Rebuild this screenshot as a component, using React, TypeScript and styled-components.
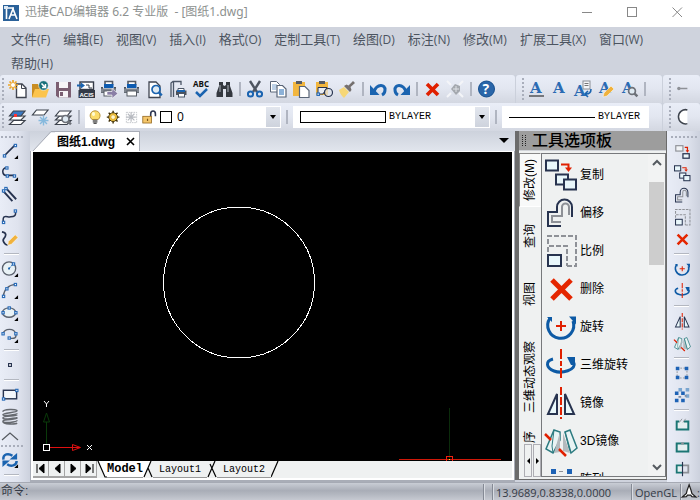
import React from "react";
import styled, { createGlobalStyle, css } from "styled-components";

const ui = `"Open Sans", "Noto Sans CJK SC", sans-serif`;
const cjk = `"Liberation Sans", "Noto Sans CJK SC", sans-serif`;
const mono = `"Liberation Mono", "Noto Sans CJK SC", monospace`;

const Global = createGlobalStyle`
  * { box-sizing: border-box; }
  body { margin: 0; background: #cfd3dd; font-family: ${ui}; font-size: 12px; color: #111; }
  button, select { font: inherit; color: inherit; border: 0; margin: 0; padding: 0; background: none; }
  svg { display: block; flex: none; }
`;

/* ---------- icons ---------- */

const navy = "#27334f";
const blue = "#1b64b0";
const red = "#e02000";
const teal = "#1b7674";
const grey = "#8e9197";

const spokes = (cx: number, cy: number, r: number, color: string, w = 1.4) => (
  <path
    stroke={color}
    strokeWidth={w}
    d={`M${cx - r} ${cy}H${cx + r}M${cx} ${cy - r}V${cy + r}M${cx - r * 0.7} ${cy - r * 0.7}L${cx + r * 0.7} ${cy + r * 0.7}M${cx + r * 0.7} ${cy - r * 0.7}L${cx - r * 0.7} ${cy + r * 0.7}`}
  />
);
const node = (x: number, y: number) => (
  <rect x={x - 1} y={y - 1} width="2.4" height="2.4" fill="#fff" stroke="#2a6cb8" strokeWidth="1.2" />
);
const more = <path d="M18 14v4h-4z" fill="#000" />;
const printer = (
  <>
    <path d="M5 5V1.500H12.500V5" fill="#fff" stroke="#555a63" strokeWidth="1.600" />
    <rect x="4" y="4" width="9.500" height="4" fill="#0d5bb0" />
    <path d="M1 7h2v2h11V7h2v6H1z" fill="#4c525c" />
    <rect x="1" y="8.500" width="15" height="4" fill="#7f858e" />
    <rect x="4" y="11" width="9.500" height="5" fill="#fff" stroke="#555a63" />
  </>
);
const bigA = (
  <text x="2" y="13" fontFamily="DejaVu Serif" fontWeight="700" fontSize="15" fill="#2b6bb3">A</text>
);
const sheets = (top: string) => (
  <>
    <path d="M5.500 12.500H17L13 16.500H1.500z" fill="#fff" stroke="#3d434d" strokeWidth="1.200" />
    <path d="M5.500 8H17L13 12H1.500z" fill="#fff" stroke="#3d434d" strokeWidth="1.200" />
    <path d="M5.500 3H17L13 8H1.500z" fill={top} stroke="#3d434d" strokeWidth="1.200" />
  </>
);
const lens = (x: number, y: number, r: number, c: string) => (
  <>
    <circle cx={x} cy={y} r={r} fill="#dfeaf2" stroke={c} strokeWidth="1.700" />
    <path d={`M${x + r * 0.7} ${y + r * 0.7}l3 3`} stroke={c} strokeWidth="2.400" />
  </>
);
const undoShape = (
  <>
    <path d="M5 11.500C8 3.500 16.500 4 16 10c0 2.500-1 4-3 5" fill="none" stroke={blue} strokeWidth="3" />
    <path d="M1 5v10h9.500z" fill={blue} />
  </>
);

const small: Record<string, React.ReactNode> = {
  new: (<><path d="M8.500 4H14l4 4v9.500H8.500z" fill="#fff" stroke="#3f4450" strokeWidth="1.400" /><path d="M13.500 4v4.500H18" fill="none" stroke="#3f4450" />{spokes(5, 5, 5, "#eda62a", 1.700)}<circle cx="5" cy="5" r="2" fill="#fff" /></>),
  open: (<><path d="M1 4h6l1.500 2H15v11H1z" fill="#c98d22" /><path d="M4 9h14l-3 8.500H1z" fill="#fcc44c" /><circle cx="12.500" cy="5.500" r="4.800" fill="#17707a" stroke="#fff" strokeWidth=".6" /><path d="M10.500 3.500L14 7M14.500 4v3.500H11" stroke="#fff" strokeWidth="1.500" fill="none" /></>),
  save: (<><path d="M2 2h15v15.500H4L2 15.500z" fill="#7b5f72" /><rect x="5" y="2" width="9" height="6" fill="#f7f5f7" /><rect x="5" y="11" width="9" height="6.500" fill="#f7f5f7" /><rect x="6" y="12" width="3" height="4" fill="#7b5f72" /></>),
  acis: (<><rect x="3" y="2" width="13.500" height="7.500" fill="#fff" stroke="#333a47" strokeWidth="1.400" /><path d="M9 5h3v3h3" fill="none" stroke="#333a47" /><path d="M0 4.500h4V2.500L8 5.500 4 8.500v-2H0z" fill={blue} /><rect x="1.500" y="10" width="16.500" height="8" fill="#333a47" /><text x="2.500" y="16.500" fontFamily="Liberation Sans" fontWeight="700" fontSize="6" fill="#fff">ACIS</text></>),
  printArrow: (<>{printer}<path d="M7 11.500h5V8.500l6 5-6 5v-3.500H7z" fill="#8a7fa6" stroke="#fff" strokeWidth=".6" /></>),
  print: printer,
  preview: (<><path d="M3 2h7l4 4v11.500H3z" fill="#fff" stroke="#3f4450" strokeWidth="1.300" />{lens(10, 9.500, 4, blue)}</>),
  pageSetup: (<><path d="M2 17V3l2-1.500h8V5M4.500 2v15" fill="none" stroke="#4b5667" strokeWidth="1.300" /><path d="M9 11V8.500h6V11" fill="#fff" stroke="#4b5667" /><rect x="7" y="10.500" width="10.500" height="4.500" fill="#4c525c" /><rect x="8" y="10" width="8" height="2" fill={blue} /><rect x="9.500" y="13.500" width="6" height="3.500" fill="#fff" stroke="#4b5667" /></>),
  spell: (<><text x="1" y="7" fontFamily="Open Sans" fontWeight="700" fontSize="8">ABC</text><path d="M4 12l4 4 7-7" fill="none" stroke={blue} strokeWidth="2.500" /></>),
  find: (<><path d="M4 2h4v3l1.500 1L11 5V2h4v4l2.500 7v4H11V9H8v8H1.500v-4L4 6z" fill="#34383f" /><path d="M5 5v7M13 5v7" stroke="#9ca2aa" strokeWidth="1.200" /></>),
  cut: (<><path d="M4 1l7 11M14 1L7 12" stroke="#4d5460" strokeWidth="2.400" /><circle cx="4.500" cy="14" r="2.600" fill="none" stroke={blue} strokeWidth="2" /><circle cx="13.500" cy="14" r="2.600" fill="none" stroke={blue} strokeWidth="2" /></>),
  copyDoc: (<><path d="M1.500 1.500h6l3 3V12h-9z" fill="#fff" stroke="#596577" /><path d="M3 5h5M3 7h5M3 9h4" stroke="#7aa3cf" /><path d="M8 5.500h5.500L17 9v8H8z" fill="#fff" stroke="#596577" strokeWidth="1.200" /><path d="M10 10h5M10 12h5M10 14h5" stroke={blue} /></>),
  paste: (<><rect x="1" y="2" width="12" height="14" fill="#f2b63f" /><rect x="4" y="1" width="6" height="3" fill="#555a63" /><path d="M7.500 6.500H13l4 4v7H7.500z" fill="#fff" stroke="#596577" strokeWidth="1.200" /></>),
  pasteBlock: (<><rect x="1" y="2" width="12" height="13" fill="#f2b63f" /><rect x="4" y="1" width="6" height="3" fill="#555a63" /><path d="M3 7.500h9L8 14H3z" fill="#e9edf3" stroke={navy} /><circle cx="13.500" cy="12.500" r="4" fill="#dfe5ee" fillOpacity=".7" stroke={navy} strokeWidth="1.200" />{node(3, 14)}</>),
  brush: (<><path d="M1 10l5-3 5 5-5 6c-2-2-4-4-5-8z" fill="#f6d777" /><path d="M6 6l6 6 1.500-2-1-3L17 3l-2-2-4.500 4.500-2-1z" fill="#75706f" /></>),
  undo: undoShape,
  redo: <g transform="matrix(-1 0 0 1 19 0)">{undoShape}</g>,
  del: <path d="M4 4l11 11M15 4L4 15" stroke={red} strokeWidth="3.600" />,
  explode: (<><path d="M1 1l4 4M17 1l-4 4M1 17l4-4M17 17l-4-4" stroke="#f4f5f8" strokeWidth="2" /><path d="M5 9l4-5 5 2v5l-4 4z" fill="#a4a8ae" /><path d="M7 9h6M10 6v6" stroke="#dfe2e7" /></>),
  help: (<><circle cx="9.500" cy="9" r="8" fill="#2a66a9" stroke="#17508f" /><text x="5.500" y="14" fontFamily="Open Sans" fontWeight="700" fontSize="14" fill="#fff">?</text></>),
  text1: (<>{bigA}<path d="M1 16h15" stroke="#111" strokeWidth="1.200" /></>),
  text2: bigA,
  text3: (<><g transform="translate(-2 3)">{bigA}</g><rect x="9" y="1" width="7" height="8" fill="#f4f5f7" stroke="#8b8f96" /><path d="M10.500 3.500h4M10.500 5.500h4" stroke="#777" /><path d="M17 9c0 4-2 5-5 5m2-3l-3 3 3 3" stroke={blue} fill="none" strokeWidth="1.600" /></>),
  text4: (<>{bigA}<path d="M6 17l1-4 7-7 3 3-7 7z" fill="#f0b23d" stroke="#fff" strokeWidth=".5" /></>),
  text5: (<>{bigA}{lens(12, 11, 3.400, "#6d7178")}</>),
  dimEnd: (<><circle cx="3" cy="9" r="1.800" fill={grey} /><path d="M3 9h9" stroke={grey} strokeWidth="1.500" /></>),
  arcTool: (<path d="M12 2A7.500 7.500 0 1 0 12 16.500" fill="#fff" stroke="#3d434d" strokeWidth="1.600" />),
  layers: (<>{sheets("#3a78c2")}<rect x="6" y="6" width="3" height="3" fill="#f33" /></>),
  layerFreeze: (<><path d="M5.500 2H17L13 7H1.500z" fill="#fff" stroke="#3d434d" strokeWidth="1.200" />{spokes(12.500, 12.500, 5, "#86b9dd")}</>),
  layerFind: (<>{sheets("#fff")}{lens(11.500, 11, 3.500, "#6d7178")}</>),
  line: (<><path d="M4 14L15 3" stroke={navy} strokeWidth="1.800" />{node(3.500, 14.500)}{node(15, 3.500)}{more}</>),
  pline: (<><path d="M6 4C0 4 1 12 6 12h8" fill="none" stroke={navy} strokeWidth="1.600" />{node(6, 4)}{node(6.500, 12.500)}{node(14, 12.500)}{more}</>),
  mline: (<><path d="M2 5l10 11M5 2l11 12" stroke={navy} strokeWidth="2" />{node(5, 2.500)}{node(2.500, 5)}</>),
  spline: (<><path d="M2.500 15C1 6 7 10 9 9.500S17 10 15 3" fill="none" stroke={navy} strokeWidth="1.600" />{node(2.500, 15)}{node(15, 3)}</>),
  sketch: (<><path d="M1 2c6 1 4 5 2 7s1 7 4 7" fill="none" stroke={navy} strokeWidth="1.800" /><path d="M7 16l1-4 7-7 3 3-7 7z" fill="#f0b23d" stroke="#fff" strokeWidth=".5" /></>),
  circle: (<><circle cx="8.500" cy="9" r="7" fill="#e9f2f6" stroke="#5a616d" strokeWidth="1.400" /><path d="M8.500 9L13 4" stroke={blue} strokeDasharray="2 1" />{node(13, 4)}<rect x="7.500" y="8" width="2" height="2" fill={blue} />{more}</>),
  arc: (<><path d="M2.500 15C3 8 8 3 15 2.500" fill="none" stroke="#5a616d" strokeWidth="1.400" />{node(2.500, 15)}{node(6, 7)}{node(15, 2.500)}{more}</>),
  ellipse: (<><ellipse cx="8.500" cy="9" rx="7" ry="5" fill="#e9f2f6" stroke="#5a616d" strokeWidth="1.400" />{node(2, 9)}{node(15.500, 9)}{node(8.500, 4)}{more}</>),
  ellipseArc: (<><path d="M2 8C4 2 14 2 15.500 8s-3 5-6 5" fill="none" stroke="#5a616d" strokeWidth="1.400" />{node(2, 8)}{node(15.500, 8)}{node(8.500, 12.500)}{more}</>),
  point: <rect x="8" y="8" width="3" height="3" fill="#fff" stroke={navy} strokeWidth="1.200" />,
  rect: (<><rect x="2.500" y="4.500" width="14" height="9" fill="#f3f6fa" stroke={navy} strokeWidth="1.500" />{node(16.500, 4.500)}{node(2.500, 13.500)}</>),
  helix: (<path d="M2 4c0-3 15-3 15-1S2 5 2 7s15 0 15-1.500M17 7c0 2-15 1-15 3.500s15 0 15-1M17 10.500c0 2-15 1-15 3.500s15 1 15-1M2 14c0 4 14 3 15 2" fill="none" stroke="#666a70" strokeWidth="1.600" />),
  sync: (<><path d="M2.500 9C2 3 8 2 12 5" fill="none" stroke={blue} strokeWidth="2.600" /><path d="M17 2v7h-8z" fill={blue} /><path d="M16.500 10.500c0 5-6 6.500-10 3.500" fill="none" stroke={blue} strokeWidth="2.600" /><path d="M1.500 17v-7h8z" fill={blue} />{more}</>),
  arr: (<><path d="M3.500 3.500h11v11h-11z" fill="none" stroke={grey} strokeDasharray="2 1.500" /><path d="M2 2h4v4H2zM12 2h4v4h-4zM2 12h4v4H2zM12 12h4v4h-4z" fill="#1d62b5" /></>),
  arrMany: (<><path d="M5 1h4v4H5zM13 1h4v4h-4zM13 8h4v4h-4z" fill="#7ba6d0" /><path d="M1 5h4v4H1zM8 5h4v4H8zM1 13h4v4H1zM8 13h4v4H8z" fill="#1d62b5" /><path d="M12 9h2v2h-2zM5 10h3v2H5z" fill="#7d8aa0" /></>),
  breakPt: (<><path d="M11 5h5v9H3V5h3" fill="#e6eff0" stroke={teal} strokeWidth="2.200" /><path d="M6 6l3-4M10 6l3-4" stroke={grey} /></>),
  breakTwo: (<><rect x="3" y="5" width="13" height="9" fill="#e6eff0" stroke={teal} strokeWidth="2.200" /><path d="M8 5h3" stroke={grey} strokeWidth="2.200" /></>),
  joinTool: (<><path d="M9 5H3v8h6" fill="#e6eff0" stroke={teal} strokeWidth="2" /><path d="M10 5h6v8h-6" fill="none" stroke={grey} strokeWidth="2" /><path d="M9.500 1v16" stroke={navy} strokeWidth="1.300" /></>),
  bulb: (<><path d="M5 12C0 7 4 1 9 1s9 6 4 11z" fill="#fcdc6b" stroke="#a77c21" /><ellipse cx="7" cy="5" rx="2" ry="2.500" fill="#fffbd5" /><path d="M6 13h6M6 15h6M7 17h4" stroke="#555" strokeWidth="1.500" /></>),
  sun: (<>{spokes(9, 9, 8, "#3b2b05", 1.800)}<circle cx="9" cy="9" r="5.500" fill="#f8c940" stroke="#3b2b05" strokeWidth="1.200" /><circle cx="9" cy="9" r="3" fill="#fff7cd" stroke="#d59d1d" /></>),
  vpFreeze: (<><rect x="3" y="3" width="13" height="13" fill="none" stroke="#b7bac0" strokeDasharray="2 1" />{spokes(9, 9, 6, "#b7bac0", 1.500)}</>),
  lock: (<><path d="M11 9V5c0-5 6-5 6 0v3" fill="none" stroke="#2c3550" strokeWidth="2" /><rect x="1" y="8" width="11" height="8.500" fill="#f4c66b" stroke="#93671f" /><path d="M7 11v3" stroke="#7d571b" strokeWidth="1.500" /></>),
  compass: (<path d="M9 1l2.500 7 1 4 5 4.500-5-.500-1.500-2H7l-1.500 2-5 .500 5-4.500 1-4z" fill="#fff" stroke="#222" strokeWidth="1.600" />),
  copyOne: (<><rect x="2" y="3" width="8" height="6" fill="#f2f4f7" stroke={grey} strokeWidth="1.300" /><path d="M12 5h3v4" fill="none" stroke={red} strokeWidth="1.400" /><path d="M13 8h4l-2 3z" fill={red} /><rect x="10" y="12" width="7" height="5" fill="#eff9fc" stroke={navy} strokeWidth="1.400" /></>),
};

const large: Record<string, React.ReactNode> = {
  copy: (<><g fill="#e9f7fb" stroke={navy} strokeWidth="2"><rect x="1" y="1.500" width="12" height="10" /><rect x="11" y="15.500" width="12" height="10" /><rect x="19" y="20.500" width="12" height="10" /></g><path d="M16 5.500h7.500V9" fill="none" stroke={red} strokeWidth="2" /><path d="M20 8.500h7L23.500 13z" fill={red} /></>),
  offset: (<><path d="M16 29H3V15h9v-5a7.500 7.500 0 0 1 15 0v10" fill="none" stroke={navy} strokeWidth="2" /><path d="M16 25H7v-6h10v-9a3.500 3.500 0 0 1 7 0v8" fill="none" stroke={grey} strokeWidth="2" /></>),
  scale: (<><path d="M3 9V1h28v30H21" fill="none" stroke={grey} strokeWidth="2" strokeDasharray="5 2" /><path d="M3 17v-6h19v20" fill="none" stroke={grey} strokeWidth="2" strokeDasharray="5 2" /><rect x="3" y="20" width="13" height="11" fill="#e9f7fb" stroke={navy} strokeWidth="2" /></>),
  remove: <path d="M7 7l19 19M26 7L7 26" stroke="#e42600" strokeWidth="5" />,
  rotate: (<><path d="M5 7a13 13 0 1 0 23 3" fill="none" stroke="#0d5aa5" strokeWidth="3" /><path d="M2 6h5v5zM24 5.500h7v8z" fill="#0d5aa5" /><path d="M11 15h10M16 10v10" stroke={red} strokeWidth="2" /></>),
  rotate3d: (<><path d="M8 10C0 12 1 19 9 22s22-1 20-8" fill="none" stroke="#0d5aa5" strokeWidth="3" /><path d="M22 8h8v8h-4z" fill="#0d5aa5" /><path d="M16 0v31" stroke={red} strokeWidth="2" strokeDasharray="10 2 5 2" /></>),
  mirror: (<><path d="M12 7v20H3zM20 7v20h9z" fill="#eaf8fb" stroke={navy} strokeWidth="2" /><path d="M16 0v32" stroke={red} strokeWidth="2" strokeDasharray="8 2" /></>),
  mirror3d: (<><path d="M9 5l6 2v8L8 28l-7-4zM20 7l5-2 7 18-6 5z" fill="#e9f4f4" stroke="#2c7b80" strokeWidth="1.500" /><path d="M15 7v20l-6 1zM18 8v18l7 2z" fill="#b3babd" /><path d="M9 5l-2 16 1 7M20 7l4 16 2 5" fill="none" stroke="#2c7b80" /><path d="M0 9l6 6M14 24l7 7" stroke={red} strokeWidth="2.500" /></>),
  array: (<><path d="M6 6h5v5H6zM22 6h5v5h-5zM6 22h5v5H6zM22 22h5v5h-5z" fill="#1d62b5" /><path d="M14 8.500h4" stroke={grey} /></>),
};

const Icon = ({ name, size = 18 }: { name: string; size?: number }) => {
  const big = name in large;
  return (
    <svg width={size} height={size} viewBox={big ? "0 0 33 33" : "0 0 19 19"} fill="none" overflow="visible" aria-hidden="true">
      {big ? large[name] : <g fill="#111">{small[name]}</g>}
    </svg>
  );
};

/* ---------- layout ---------- */

const Window = styled.div`
  height: 100vh;
  display: flex;
  flex-direction: column;
  overflow: hidden;
`;
const TitleBar = styled.header`
  height: 27px;
  flex: none;
  display: flex;
  align-items: center;
  gap: 6px;
  padding: 0 0 3px 3px;
  background: #fff;
  color: #8d918f;
  white-space: pre;
`;
const TitleText = styled.h1`
  flex: 1;
  margin: 0;
  font: 400 12px/18px "Noto Sans", "Noto Sans CJK SC", sans-serif;
`;
const WinButtons = styled.div`
  display: flex;
`;
const WinButton = styled.button`
  width: 45px;
  height: 22px;
  display: grid;
  place-items: center;
`;
const Menu = styled.nav`
  flex: none;
  display: flex;
  flex-wrap: wrap;
  column-gap: 13px;
  padding: 0 11px;
  background: #cfd3dd;
`;
const MenuItem = styled.button`
  height: 24px;
  font: 13px/20px ${ui};
  color: #4c5460;
  white-space: nowrap;
  small { font-size: 12px; }
`;
const BarRow = styled.div`
  height: 28px;
  flex: none;
  display: flex;
  background: #cbd0db;
  gap: 1px;
`;
const Bar = styled.div<{ $w?: number }>`
  ${(p) => (p.$w ? css`flex: 0 0 ${p.$w}px;` : css`flex: 1; min-width: 0;`)}
  display: flex;
  align-items: center;
  overflow: hidden;
  border-radius: 3px 3px 0 0;
  background: linear-gradient(#e9edf7, #e2e6f0 50%, #d3d7e1);
`;
const dots = (dir: string) => css`
  background: repeating-linear-gradient(${dir}, #a9aebb 0 2px, transparent 2px 4px);
`;
const Grip = styled.span<{ $lead?: number }>`
  flex: none;
  width: 2px;
  height: 22px;
  margin: 0 2px 0 ${(p) => p.$lead ?? 2}px;
  ${dots("to bottom")}
`;
const GripH = styled.span<{ $w: number }>`
  flex: none;
  height: 2px;
  width: ${(p) => p.$w}px;
  margin-bottom: 2px;
  ${dots("to right")}
`;
const Tool = styled.button`
  flex: none;
  width: 23px;
  height: 26px;
  display: grid;
  place-items: center;
`;
const Divider = styled.span`
  flex: none;
  width: 2px;
  height: 14px;
  margin: 0 3px;
  background: #b0b5c1;
`;
const Combo = styled.label<{ $w: number }>`
  flex: none;
  width: ${(p) => p.$w}px;
  height: 22px;
  display: flex;
  align-items: center;
  gap: 3px;
  margin: 0 2px;
  padding: 1px 1px 1px 3px;
  background: #fff;
  color: #000;
`;
const Select = styled.select<{ $mono?: boolean }>`
  flex: 1;
  min-width: 0;
  appearance: none;
  outline: none;
  background: transparent;
  font: ${(p) => (p.$mono ? `10px/18px ${mono}` : `12px/18px ${ui}`)};
`;
const Drop = styled.span`
  width: 14px;
  height: 20px;
  display: grid;
  place-items: center;
  background: linear-gradient(#e2e6ee, #ced3dd);
`;
const LayerColor = styled.span`
  width: 12px;
  height: 12px;
  border: 1px solid #000;
  margin-right: 2px;
`;
const Swatch = styled.span`
  width: 86px;
  height: 12px;
  margin-left: 4px;
  border: 1px solid #000;
`;
const LineSample = styled(Swatch)`
  height: 1px;
  border-width: 1px 0 0;
`;

const Work = styled.main`
  flex: 1;
  min-height: 0;
  display: flex;
`;
const SideBar = styled.aside<{ $right?: boolean }>`
  flex: none;
  width: ${(p) => (p.$right ? 33 : 30)}px;
  display: flex;
  flex-direction: column;
  padding: 5px 0 0 ${(p) => (p.$right ? 4 : 1)}px;
  background: linear-gradient(to right, #e9edf7, #dfe3ee 60%, #ccd1dd);
  overflow: hidden;
`;
const SideTool = styled.button`
  flex: none;
  width: 22px;
  height: 22px;
  display: flex;
  align-items: center;
`;
const RightTool = styled(SideTool)`
  justify-content: center;
`;
const MoreTool = styled(SideTool)`
  height: 17px;
`;
const Rule = styled.span`
  flex: none;
  width: 15px;
  height: 2px;
  margin: 3px;
  background: #b3b7c0;
  border-bottom: 1px solid #fff;
`;

const Doc = styled.section`
  flex: 1;
  min-width: 0;
  display: flex;
  flex-direction: column;
  background: #d9dde7;
`;
const FileTabs = styled.div`
  height: 20px;
  flex: none;
  display: flex;
  align-items: center;
  padding-right: 6px;
  background: linear-gradient(#cdd2dc, #e1e5ed);
`;
const Slant = styled.svg`
  align-self: stretch;
`;
const FileTab = styled.div`
  height: 20px;
  display: flex;
  align-items: center;
  gap: 8px;
  padding: 0 1px 0 2px;
  background: #fff;
  border-top: 1px solid #a9adb7;
  border-right: 1px solid #a9adb7;
  font: 700 12px/16px ${cjk};
  color: #000;
`;
const CloseTab = styled.button`
  width: 15px;
  height: 15px;
  display: grid;
  place-items: center;
`;
const Spring = styled.span`
  flex: 1;
`;
const Sheet = styled.div`
  flex: 1;
  min-height: 0;
  display: flex;
  flex-direction: column;
  border: solid #a9adb7;
  border-width: 0 1px 2px 1px;
  background: #fff;
  padding: 1px 2px 2px;
`;
const Canvas = styled.div`
  flex: 1;
  min-height: 0;
  position: relative;
  background: #000;
  overflow: hidden;
`;
const Drawing = styled.svg`
  width: 100%;
  height: 100%;
`;
const Ucs = styled.svg`
  position: absolute;
  left: 8px;
  bottom: 9px;
`;
const Cursor = styled.svg`
  position: absolute;
  right: 11px;
  bottom: 0;
`;
const Sheets = styled.div`
  height: 17px;
  flex: none;
  display: flex;
  background: #eff1f1;
  overflow: hidden;
`;
const StepButton = styled.button`
  width: 16px;
  background: #eff1f1;
  border: solid #a5a5a5;
  border-width: 0 1px 2px 0;
  display: grid;
  place-items: center;
`;
const SheetTab = styled.button<{ $on?: boolean }>`
  font: ${(p) => (p.$on ? 700 : 400)} ${(p) => (p.$on ? 12 : 10)}px/15px ${mono};
  color: #000;
  border-bottom: 1px solid #999;
  background: ${(p) => (p.$on ? "#fff" : "transparent")};
  padding: 0 ${(p) => (p.$on ? 0 : 6)}px;
`;

const Palette = styled.section`
  flex: none;
  width: 152px;
  display: flex;
  flex-direction: column;
  border: solid #6b6b6b;
  border-width: 0 1px 1px 4px;
  margin-bottom: 2px;
  background: #eff1f1;
`;
const PaletteTitle = styled.h2`
  flex: none;
  height: 20px;
  margin: 0;
  display: flex;
  align-items: center;
  gap: 6px;
  padding-left: 3px;
  background: #9d9d9d;
  border-bottom: 1px solid #d0d3d8;
  font: 500 16px/20px ${cjk};
  color: #000;
`;
const DarkDots = styled.span`
  width: 4px;
  height: 13px;
  background:
    repeating-linear-gradient(#9d9d9d 0 1px, transparent 1px 2px),
    repeating-linear-gradient(to right, #222 0 1px, #9d9d9d 1px 3px);
`;
const PaletteBody = styled.div`
  flex: 1;
  min-height: 0;
  display: flex;
  padding: 2px 0;
`;
const PaletteTabs = styled.div`
  width: 22px;
  flex: none;
  display: flex;
  flex-direction: column;
`;
const PaletteTab = styled.button<{ $h: number; $on?: boolean }>`
  flex: 0 ${(p) => (p.$h < 20 ? 1 : 0)} ${(p) => p.$h}px;
  overflow: hidden;
  display: flex;
  align-items: center;
  justify-content: center;
  background: ${(p) => (p.$on ? "#f8f9f9" : "transparent")};
  ${(p) => p.$on && css`border: 1px solid; border-color: #888 transparent #fff #888;`}
  color: #000;
  span {
    writing-mode: vertical-rl;
    text-orientation: sideways;
    transform: rotate(180deg);
    font: 12px/18px ${cjk};
    white-space: nowrap;
  }
`;
const TabSteps = styled.div`
  flex: none;
  height: 33px;
  margin-top: auto;
  padding-left: 5px;
  display: flex;
  gap: 1px;
`;
const TabStep = styled.button`
  width: 8px;
  display: grid;
  place-items: center;
  border: 1px solid #adadb3;
`;
const PalettePanel = styled.div`
  flex: 1;
  min-width: 0;
  display: flex;
  border: 1px solid #77797c;
  overflow: hidden;
`;
const CommandList = styled.ul`
  flex: 1;
  margin: 0;
  padding: 2px 0 0;
  list-style: none;
  overflow: hidden;
`;
const Command = styled.button`
  height: 38px;
  width: 100%;
  display: flex;
  align-items: center;
  gap: 2px;
  padding-left: 3px;
  font: 12px/18px ${cjk};
  color: #000;
  white-space: nowrap;
`;
const ScrollBar = styled.div`
  width: 17px;
  flex: none;
  display: flex;
  flex-direction: column;
  padding: 0 1px;
  background: #f2f3f3;
`;
const ScrollButton = styled.button`
  height: 18px;
  flex: none;
  display: grid;
  place-items: center;
`;
const Track = styled.div`
  flex: 1;
  padding-top: 10px;
`;
const Thumb = styled.div`
  height: 30%;
  background: #cdcdcd;
`;

const Status = styled.footer`
  flex: none;
  height: 18px;
  display: flex;
  background: linear-gradient(#c9cdd5, #a9adb7 45%, #b5b9c2 70%, #c6c9d1);
  border-top: 1px solid #a6aab4;
  font: 11px/17px ${ui};
  color: #343a46;
`;
const Prompt = styled.output`
  flex: 1;
  padding-left: 1px;
  font: 12px/17px ${cjk};
`;
const Cell = styled.span<{ $w: number }>`
  width: ${(p) => p.$w}px;
  margin-top: 1px;
  padding-left: 3px;
  display: flex;
  gap: 1px;
  border-left: 1px solid #858a95;
  box-shadow: inset 1px 0 #d9dce2;
  white-space: nowrap;
`;
const IconCell = styled(Cell)`
  padding-left: 1px;
  gap: 0;
`;

/* ---------- data ---------- */

const menus: [string, string][] = [
  ["文件", "F"], ["编辑", "E"], ["视图", "V"], ["插入", "I"], ["格式", "O"], ["定制工具", "T"],
  ["绘图", "D"], ["标注", "N"], ["修改", "M"], ["扩展工具", "X"], ["窗口", "W"], ["帮助", "H"],
];
const standard = [
  "new", "open", "save", "acis", "printArrow", "print", "preview", "pageSetup", "spell", "find", "|",
  "cut", "copyDoc", "paste", "pasteBlock", "brush", "|", "undo", "redo", "|", "del", "explode", "|", "help",
];
const textTools = ["text1", "text2", "text3", "text4", "text5", "|"];
const drawTools = [
  "line", "pline", "mline", "spline", "sketch", "|", "circle", "arc", "ellipse", "ellipseArc", "|",
  "point", "|", "rect", "helix",
];
const modifyTools = [
  "copyOne", "copy", "offset", "scale", "remove", "|", "rotate", "rotate3d", "|", "mirror", "mirror3d", "|",
  "arr", "arrMany", "|", "breakPt", "breakTwo", "joinTool",
];
const commands: [string, string][] = [
  ["copy", "复制"], ["offset", "偏移"], ["scale", "比例"], ["remove", "删除"], ["rotate", "旋转"],
  ["rotate3d", "三维旋转"], ["mirror", "镜像"], ["mirror3d", "3D镜像"], ["array", "阵列"],
];
const paletteTabs: [string, number][] = [
  ["修改(M)", 54], ["查询", 58], ["视图", 58], ["三维动态观察", 108], ["序", 15],
];
const steps: [string, string][] = [
  ["首个布局", "M3 3v9M10 3v9L5 7.500z"], ["上一布局", "M10 3v9L5 7.500z"],
  ["下一布局", "M5 3v9l5-4.500z"], ["末尾布局", "M11 3v9M4 3v9l5-4.500z"],
];

const Tools = ({ items }: { items: string[] }) => (
  <>{items.map((n, i) => (n === "|" ? <Divider key={i} /> : <Tool key={i} aria-label={n}><Icon name={n} size={19} /></Tool>))}</>
);
const DropArrow = () => (
  <Drop><svg width="7" height="4"><path d="M0 0h6L3 4z" fill="#000" /></svg></Drop>
);
const Chevron = ({ down }: { down?: boolean }) => (
  <svg width="10" height="8">
    <path d={down ? "M1 2l4 4 4-4" : "M1 6l4-4 4 4"} fill="none" stroke="#555a60" strokeWidth="2" />
  </svg>
);
const Edge = ({ d, fillD }: { d: string; fillD?: string }) => (
  <svg width="10" height="17">
    {fillD && <path d={fillD} fill="#fff" />}
    <path d={d} stroke="#000" strokeWidth="1.200" fill="none" />
  </svg>
);

export default function App() {
  return (
    <Window>
      <Global />
      <TitleBar>
        <svg width="16" height="17" viewBox="0 0 16 17">
          <rect width="16" height="16" y="1" fill="#2a6199" />
          <path d="M2 4h9M3.500 5v10M6 15l4-10 4 10M8 11h4.500" stroke="#fff" strokeWidth="1.600" fill="none" />
          <rect x="1" y="2" width="4" height="3" fill="#dce8f3" />
        </svg>
        <TitleText>{"迅捷CAD编辑器 6.2 专业版  - [图纸1.dwg]"}</TitleText>
        <WinButtons>
          <WinButton aria-label="最小化"><svg width="11" height="11"><path d="M0 5.500h10" stroke="#888" /></svg></WinButton>
          <WinButton aria-label="最大化"><svg width="11" height="11"><rect x=".5" y=".5" width="9" height="9" fill="none" stroke="#888" /></svg></WinButton>
          <WinButton aria-label="关闭窗口"><svg width="11" height="11"><path d="M.5.5l9.500 9.500M10 .5L.5 10" stroke="#888" /></svg></WinButton>
        </WinButtons>
      </TitleBar>
      <Menu>
        {menus.map(([t, k]) => <MenuItem key={k}>{t}<small>({k})</small></MenuItem>)}
      </Menu>
      <BarRow>
        <Bar><Grip /><Tools items={standard} /></Bar>
        <Bar $w={146}><Grip $lead={6} /><Tools items={textTools} /></Bar>
        <Bar $w={37}><Grip $lead={6} /><Tool aria-label="标注"><Icon name="dimEnd" /></Tool></Bar>
      </BarRow>
      <BarRow>
        <Bar>
          <Grip />
          <Tools items={["layers", "layerFreeze", "layerFind", "|"]} />
          <Combo $w={196}>
            {["bulb", "sun", "vpFreeze", "lock"].map((n) => <Icon key={n} name={n} size={15} />)}
            <LayerColor />
            <Select aria-label="图层" defaultValue="0"><option>0</option></Select>
            <DropArrow />
          </Combo>
          <Divider />
          <Combo $w={197}>
            <Swatch />
            <Select $mono aria-label="颜色" defaultValue="BYLAYER"><option>BYLAYER</option></Select>
            <DropArrow />
          </Combo>
          <Divider />
          <Combo $w={147}>
            <LineSample />
            <Select $mono aria-label="线型" defaultValue="BYLAYER"><option>BYLAYER</option></Select>
          </Combo>
        </Bar>
        <Bar $w={37}><Grip $lead={6} /><Tool aria-label="圆弧"><Icon name="arcTool" /></Tool></Bar>
      </BarRow>

      <Work>
        <SideBar>
          <GripH $w={24} />
          {drawTools.map((n, i) => (n === "|" ? <Rule key={i} /> : <SideTool key={i} aria-label={n}><Icon name={n} /></SideTool>))}
          <MoreTool aria-label="更多"><svg width="18" height="9"><path d="M1 8l8-7 8 7" fill="none" stroke="#555a60" strokeWidth="1.200" /></svg></MoreTool>
          <GripH $w={24} />
          <SideTool aria-label="重生成"><Icon name="sync" /></SideTool>
          <Rule />
        </SideBar>

        <Doc>
          <FileTabs>
            <Slant width="25" height="20"><path d="M3 20L21 1.500H25V20z" fill="#fff" /><path d="M3 20L21 .5h4" fill="none" stroke="#a9adb7" /></Slant>
            <FileTab>
              图纸1.dwg
              <CloseTab aria-label="关闭"><svg width="9" height="9"><path d="M1 1l7 7M8 1L1 8" stroke="#000" strokeWidth="1.600" /></svg></CloseTab>
            </FileTab>
            <Spring />
            <svg width="10" height="6"><path d="M0 0h10L5 5z" fill="#000" /></svg>
          </FileTabs>
          <Sheet>
            <Canvas>
              <Drawing shapeRendering="crispEdges"><circle cx="206" cy="130.5" r="75.500" fill="none" stroke="#fff" /></Drawing>
              <Ucs width="56" height="52" viewBox="0 0 56 52" fill="none">
                <path d="M5.500 44V22M2.500 22h6l-3-9z" stroke="#0a3a0a" />
                <path d="M9 47.500h30" stroke="#e01010" />
                <path d="M31.500 44.500v6l8-3z" stroke="#e01010" />
                <rect x="2.500" y="44.500" width="6" height="6" stroke="#fff" />
                <path d="M3 1l2.500 3L8 1M5.500 4v3M46 45l5 5M51 45l-5 5" stroke="#fff" />
              </Ucs>
              <Cursor width="102" height="53" viewBox="0 0 102 53" fill="none">
                <path d="M50.500 0v50" stroke="#0b2c0b" />
                <path d="M0 51.500h102" stroke="#d01808" />
                <rect x="47.500" y="48.500" width="6" height="6" stroke="#f02010" />
                <rect x="50" y="51" width="1" height="1" fill="#ff0" />
              </Cursor>
            </Canvas>
            <Sheets>
              {steps.map(([label, d]) => (
                <StepButton key={label} aria-label={label}><svg width="14" height="15"><path d={d} fill="#000" stroke="#000" /></svg></StepButton>
              ))}
              <Edge fillD="M1 0H10V16H8z" d="M1 0l7 16h2" />
              <SheetTab $on>Model</SheetTab>
              <Edge fillD="M0 0H8L2 16H0z" d="M8 0L1 16M5 7l4 9" />
              <SheetTab>Layout1</SheetTab>
              <Edge d="M1 16L8 0M3 3l6 13" />
              <SheetTab>Layout2</SheetTab>
              <Edge d="M0 16L7 0" />
            </Sheets>
          </Sheet>
        </Doc>

        <Palette>
          <PaletteTitle><DarkDots />工具选项板</PaletteTitle>
          <PaletteBody>
            <PaletteTabs>
              {paletteTabs.map(([t, h], i) => <PaletteTab key={t} $h={h} $on={i === 0}><span>{t}</span></PaletteTab>)}
              <TabSteps>
                <TabStep aria-label="上"><svg width="5" height="6"><path d="M4 0v6L1 3z" fill="#000" /></svg></TabStep>
                <TabStep aria-label="下"><svg width="5" height="6"><path d="M1 0v6l3-3z" fill="#000" /></svg></TabStep>
              </TabSteps>
            </PaletteTabs>
            <PalettePanel>
              <CommandList>
                {commands.map(([icon, label]) => (
                  <li key={icon}><Command><Icon name={icon} size={33} />{label}</Command></li>
                ))}
              </CommandList>
              <ScrollBar>
                <ScrollButton aria-label="向上滚动"><Chevron /></ScrollButton>
                <Track><Thumb /></Track>
                <ScrollButton aria-label="向下滚动"><Chevron down /></ScrollButton>
              </ScrollBar>
            </PalettePanel>
          </PaletteBody>
        </Palette>

        <SideBar $right>
          <GripH $w={26} />
          {modifyTools.map((n, i) => (n === "|" ? <Rule key={i} /> : <RightTool key={i} aria-label={n}><Icon name={n} size={17} /></RightTool>))}
        </SideBar>
      </Work>

      <Status>
        <Prompt>命令:</Prompt>
        <Cell $w={9} />
        <Cell $w={139}>13.9689,0.8338,0.0000</Cell>
        <Cell $w={49}>OpenGL</Cell>
        <IconCell $w={20}><Icon name="compass" size={15} />:</IconCell>
      </Status>
    </Window>
  );
}
